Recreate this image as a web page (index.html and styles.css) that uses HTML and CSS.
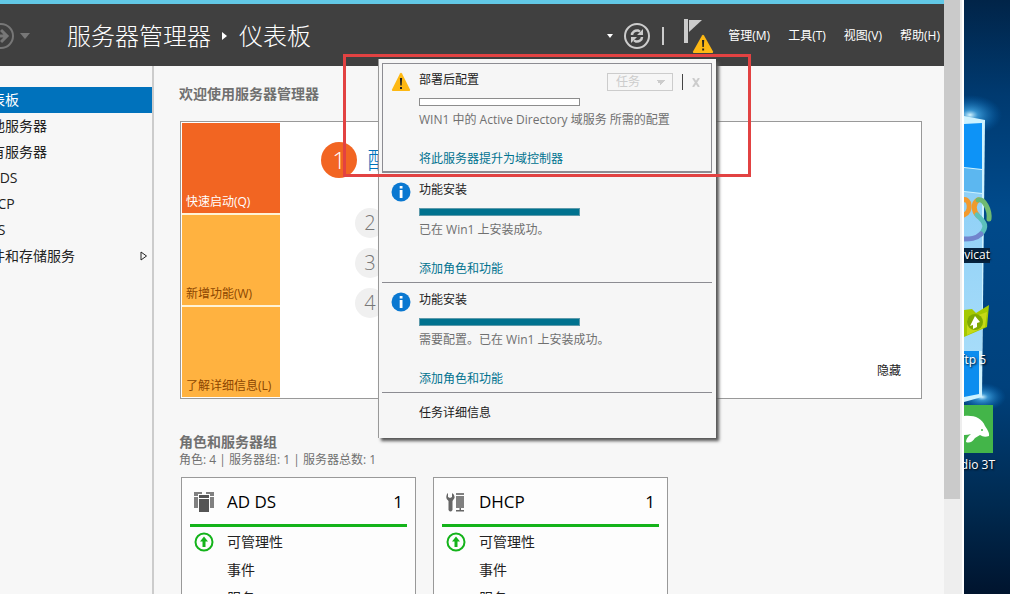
FILE: index.html
```html
<!DOCTYPE html>
<html lang="zh-CN">
<head>
    <meta charset="UTF-8">
    <meta name="viewport" content="width=device-width, initial-scale=1.0">
    <title>服务器管理器</title>
    <link rel="stylesheet" href="styles.css">
</head>
<body>
    <div class="screen">
        <div class="window">
            <header class="header">
                <button class="icon-btn forward-btn" aria-label="前进">
                    <svg width="26" height="26" viewBox="0 0 26 26">
                        <circle cx="13" cy="13" r="12" fill="none" stroke="#777" stroke-width="2"/>
                        <path d="M6 13h13M13 7l6 6-6 6" fill="none" stroke="#777" stroke-width="3"/>
                    </svg>
                    <svg width="12" height="6" viewBox="0 0 12 6"><path d="M1 0h10L6 6z" fill="#777"/></svg>
                </button>
                <h1 class="title">
                    <span>服务器管理器</span>
                    <svg width="6" height="8" viewBox="0 0 6 8"><path d="M0 0l5 4-5 4z" fill="#fff"/></svg>
                    <span>仪表板</span>
                </h1>
                <div class="tools">
                    <button class="icon-btn" aria-label="刷新">
                        <svg width="8" height="5" viewBox="0 0 8 5"><path d="M1 0h6L4 4z" fill="#fff"/></svg>
                        <svg width="26" height="26" viewBox="0 0 26 26">
                            <circle cx="13" cy="13" r="12" fill="none" stroke="#ccc" stroke-width="2"/>
                            <path d="M8 12c0-3 3-5 6-4.500l2 1M18 14c0 3-3 5-6 4.500l-2-1" fill="none" stroke="#ccc" stroke-width="2.500"/>
                            <path d="M19 6v6h-6zM7 20v-6h6z" fill="#ccc"/>
                        </svg>
                    </button>
                    <span class="tools-line"></span>
                    <button class="icon-btn" aria-label="通知">
                        <svg width="30" height="36" viewBox="0 0 30 36">
                            <path d="M0 1h4v24H0z" fill="#ccc"/>
                            <path d="M5 2h13L5 14z" fill="#ccc"/>
                            <path d="M18 17.500q1-1.500 2 0l9 16q.5 1.500-1 1.500H10q-1.500 0-1-1.500z" fill="#fdb813"/>
                            <path d="M18 22h2.200l-.4 7h-1.400zM18.200 30.500h1.900v2h-1.900z" fill="#222"/>
                        </svg>
                    </button>
                </div>
                <nav class="menu">
                    <a href="#">管理(M)</a>
                    <a href="#">工具(T)</a>
                    <a href="#">视图(V)</a>
                    <a href="#">帮助(H)</a>
                </nav>
            </header>

            <div class="content">
                <nav class="sidebar">
                    <a class="active" href="#">仪表板</a>
                    <a href="#">本地服务器</a>
                    <a href="#">所有服务器</a>
                    <a href="#">AD DS</a>
                    <a href="#">DHCP</a>
                    <a href="#">DNS</a>
                    <a href="#">文件和存储服务
                        <svg width="8" height="10" viewBox="0 0 8 10"><path d="M1 1l5.500 4L1 9z" fill="none" stroke="#222"/></svg>
                    </a>
                </nav>

                <main class="main">
                    <h2>欢迎使用服务器管理器</h2>
                    <section class="welcome">
                        <div class="tiles">
                            <button class="tile tile-active">快速启动(Q)</button>
                            <button class="tile">新增功能(W)</button>
                            <button class="tile">了解详细信息(L)</button>
                        </div>
                        <ol class="steps">
                            <li class="current"><span class="number">1</span><a href="#">配</a></li>
                            <li><span class="number">2</span></li>
                            <li><span class="number">3</span></li>
                            <li><span class="number">4</span></li>
                        </ol>
                        <button class="hide-btn">隐藏</button>
                    </section>

                    <h2>角色和服务器组</h2>
                    <p class="summary">角色: 4 | 服务器组: 1 | 服务器总数: 1</p>
                    <div class="cards">
                        <section class="card">
                            <h3>
                                <svg width="20" height="20" viewBox="0 0 20 20">
                                    <path d="M0 0h8v2H4v2H0zM12 0h8v4h-4V2h-4zM0 5h4v11H0zM16 5h4v11h-4z" fill="#808080"/>
                                    <path d="M5 3h10v3H5zM5 7h10v13H5z" fill="#555"/>
                                </svg>
                                AD DS
                                <span class="count">1</span>
                            </h3>
                            <ul>
                                <li>
                                    <svg width="20" height="20" viewBox="0 0 20 20">
                                        <circle cx="10" cy="10" r="8.500" fill="none" stroke="#14b31a" stroke-width="2"/>
                                        <path d="M10 4.500l4 5h-2.500V15h-3V9.500H6z" fill="#14b31a"/>
                                    </svg>
                                    可管理性
                                </li>
                                <li>事件</li>
                                <li>服务</li>
                            </ul>
                        </section>
                        <section class="card">
                            <h3>
                                <svg width="20" height="20" viewBox="0 0 20 20">
                                    <path d="M2 1v4l2 1 2-1V1q3 1.500 2.500 5L6.500 9v9q-2 3-4 0V9Q-1 7 1 2z" fill="#666"/>
                                    <path d="M10 1h8v2h-8zM10 4h8v12h-8z" fill="#808080"/>
                                    <path d="M13.500 16h1.500v2h3v1.500h-8V18h3.500z" fill="#666"/>
                                </svg>
                                DHCP
                                <span class="count">1</span>
                            </h3>
                            <ul>
                                <li>
                                    <svg width="20" height="20" viewBox="0 0 20 20">
                                        <circle cx="10" cy="10" r="8.500" fill="none" stroke="#14b31a" stroke-width="2"/>
                                        <path d="M10 4.500l4 5h-2.500V15h-3V9.500H6z" fill="#14b31a"/>
                                    </svg>
                                    可管理性
                                </li>
                                <li>事件</li>
                                <li>服务</li>
                            </ul>
                        </section>
                    </div>
                </main>
            </div>

            <div class="popup">
                <div class="notice selected">
                    <svg width="20" height="20" viewBox="0 0 20 20">
                        <path d="M9 1.500q1-1.500 2 0l8 16q.5 1.500-1 1.500H2q-1.500 0-1-1.500z" fill="#fdb813"/>
                        <path d="M8.900 6h2.200l-.4 7.500H9.300zM9 15h2v2H9z" fill="#222"/>
                    </svg>
                    <div class="notice-body">
                        <h4>部署后配置</h4>
                        <div class="bar"></div>
                        <p>WIN1 中的 Active Directory 域服务 所需的配置</p>
                        <a href="#">将此服务器提升为域控制器</a>
                    </div>
                    <div class="notice-tools">
                        <select aria-label="任务" disabled>
                            <option>任务</option>
                        </select>
                        <span class="line"></span>
                        <button class="icon-btn" aria-label="关闭">
                            <svg width="8" height="9" viewBox="0 0 8 9"><path d="M1 0l6 9M7 0L1 9" fill="none" stroke="#ccc" stroke-width="2"/></svg>
                        </button>
                    </div>
                </div>
                <div class="notice">
                    <svg width="20" height="20" viewBox="0 0 20 20">
                        <circle cx="10" cy="10" r="9.500" fill="#0a78d1"/>
                        <path d="M8.700 4h2.800v2.500H8.700zM8.700 8h2.800v8H8.700z" fill="#fff"/>
                    </svg>
                    <div class="notice-body">
                        <h4>功能安装</h4>
                        <div class="bar done"></div>
                        <p>已在 Win1 上安装成功。</p>
                        <a href="#">添加角色和功能</a>
                    </div>
                </div>
                <div class="notice">
                    <svg width="20" height="20" viewBox="0 0 20 20">
                        <circle cx="10" cy="10" r="9.500" fill="#0a78d1"/>
                        <path d="M8.700 4h2.800v2.500H8.700zM8.700 8h2.800v8H8.700z" fill="#fff"/>
                    </svg>
                    <div class="notice-body">
                        <h4>功能安装</h4>
                        <div class="bar done"></div>
                        <p>需要配置。已在 Win1 上安装成功。</p>
                        <a href="#">添加角色和功能</a>
                    </div>
                </div>
                <button class="details-btn">任务详细信息</button>
            </div>
            <div class="highlight"></div>
        </div>

        <div class="scrollbar"><div class="thumb"></div></div>

        <div class="desktop">
            <svg class="wallpaper" width="46" height="594" viewBox="0 0 46 594">
                <defs>
                    <linearGradient id="sky" x1="0" y1="0" x2="0" y2="1">
                        <stop offset="0" stop-color="#012448"/>
                        <stop offset=".16" stop-color="#003a70"/>
                        <stop offset=".35" stop-color="#004a8b"/>
                        <stop offset=".65" stop-color="#00417c"/>
                        <stop offset=".85" stop-color="#002a50"/>
                        <stop offset="1" stop-color="#00142e"/>
                    </linearGradient>
                    <linearGradient id="pane" x1="0" y1="0" x2="0" y2="1">
                        <stop offset="0" stop-color="#8fd0f7"/>
                        <stop offset="1" stop-color="#a6dcf9"/>
                    </linearGradient>
                    <radialGradient id="glow">
                        <stop offset="0" stop-color="#d8f6ff"/>
                        <stop offset=".25" stop-color="#4bb4f2" stop-opacity=".7"/>
                        <stop offset="1" stop-color="#0070c8" stop-opacity="0"/>
                    </radialGradient>
                </defs>
                <rect width="46" height="594" fill="url(#sky)"/>
                <ellipse cx="6" cy="115" rx="32" ry="20" fill="url(#glow)"/>
                <ellipse cx="18" cy="397" rx="24" ry="14" fill="url(#glow)"/>
                <path d="M0 116l21 4-3 277-18 5z" fill="#cdf2ff"/>
                <path d="M0 124l18-1v46l-18-2z" fill="#0d93f7"/>
                <path d="M0 168l18 2v23l-18-2z" fill="#5cb7f0"/>
                <path d="M0 192l18 2v157H0z" fill="url(#pane)"/>
                <path d="M0 351h15v43l-15 3z" fill="#0c8def"/>
                <rect y="248" width="26" height="15" fill="#06233f"/>
                <!-- Navicat -->
                <g fill="none" stroke-width="5" stroke-linecap="round">
                    <path d="M-1 200c7-3 9 12 1 15" stroke="#f29a2e"/>
                    <path d="M14 200c-5 3-5 11 0 16" stroke="#f09a2c"/>
                    <path d="M14 200c6-2 12 10 11 19" stroke="#6fba72"/>
                    <path d="M13 215c9 8 10 12 4 19" stroke="#5cc1bb"/>
                    <path d="M17 234c-5 5-11 5-18 5" stroke="#7185cd"/>
                </g>
                <!-- Xftp -->
                <path d="M0 310l8-1 4 4 13-8-2 22-23 10z" fill="#a5c900"/>
                <path d="M3 319l20-7-2 15-18 8z" fill="#c6d916"/>
                <circle cx="11" cy="322" r="8" fill="#7fa900"/>
                <path d="M11 316l5 6-3 1v4l-4 2v-4l-3 1z" fill="#fff"/>
                <!-- Studio 3T -->
                <rect y="405" width="29" height="48" fill="#43b549"/>
                <path d="M0 416c10-1 18 2 21 10q5 7 4 10-5 2-9-1l-5 3q-4 6-9 4 0-4 5-8-3 1-7 1z" fill="#fff"/>
                <circle cx="18" cy="430" r="1" fill="#43b549"/>
            </svg>
            <span class="label label-navicat">Navicat</span>
            <span class="label label-xftp">Xftp 5</span>
            <span class="label label-studio">Studio 3T</span>
        </div>
    </div>
</body>
</html>
```
FILE: styles.css
```css
* {
    box-sizing: border-box;
}
body {
    margin: 0;
    font-family: "Open Sans", "Noto Sans CJK SC", sans-serif;
    font-size: 12px;
    line-height: 18px;
    color: #222;
    background: #f7f7f7;
}
h1, h2, h3, h4, p, ul, ol {
    margin: 0;
    padding: 0;
    font-weight: normal;
}
ul, ol {
    list-style: none;
}
a {
    color: inherit;
    text-decoration: none;
}
button, select {
    font: inherit;
    color: inherit;
    background: none;
    border: none;
    border-radius: 0;
    padding: 0;
}
svg {
    display: block;
    flex: none;
}
.screen {
    display: flex;
    height: 100vh;
    overflow: hidden;
}
.window {
    position: relative;
    flex: 1;
    min-width: 0;
    display: flex;
    flex-direction: column;
    overflow: hidden;
}

/* header */
.header {
    flex: none;
    display: flex;
    align-items: center;
    height: 66px;
    padding: 2px 4px 0 0;
    border-top: 4px solid #62c8e6;
    background: #404040;
    color: #fff;
}
.icon-btn {
    display: flex;
    align-items: center;
    gap: 10px;
}
.forward-btn {
    gap: 5px;
    margin-left: -12px;
}
.title {
    display: flex;
    align-items: center;
    gap: 11px;
    margin-left: 36px;
    font-size: 24px;
    font-weight: 300;
    line-height: 36px;
}
.tools {
    display: flex;
    align-items: center;
    gap: 12px;
    margin-left: auto;
}
.tools-line {
    width: 2px;
    height: 18px;
    margin-right: 8px;
    background: #ccc;
}
.menu {
    display: flex;
    gap: 18px;
    margin-left: 14px;
}

/* layout */
.content {
    flex: 1;
    min-height: 0;
    display: flex;
}
.sidebar {
    flex: 0 0 154px;
    padding-top: 21px;
    border-right: 2px solid #ccc;
    font-size: 14px;
    line-height: 26px;
}
.sidebar a {
    display: flex;
    align-items: center;
    justify-content: space-between;
    margin-left: -23px;
    padding-right: 4px;
}
.sidebar .active {
    background: #0072bc;
    color: #fff;
}
.main {
    flex: 1;
    min-width: 0;
    padding: 18px 22px 0 25px;
}
.main h2 {
    font-size: 14px;
    font-weight: bold;
    line-height: 20px;
    color: #707070;
}

/* welcome */
.welcome {
    display: flex;
    margin: 17px 0 33px 1px;
    padding: 1px;
    border: 1px solid #999;
    background: #fff;
}
.tiles {
    display: grid;
    grid-template-rows: repeat(3, 90px);
    gap: 2px;
    width: 98px;
    background: #fff3d6;
}
.tile {
    display: flex;
    align-items: flex-end;
    padding: 0 4px 2px;
    background: #ffb240;
    color: #8c4600;
    white-space: nowrap;
}
.tile-active {
    background: #f26522;
    color: #fff;
}
.steps {
    flex: 1;
    padding: 19px 0 0 41px;
}
.steps li {
    display: flex;
    align-items: center;
    gap: 10px;
    height: 40px;
    padding-left: 34px;
    font-size: 20px;
    font-weight: 300;
}
.steps .current {
    height: 36px;
    margin-bottom: 25px;
    padding-left: 0;
    font-size: 24px;
    color: #0072bc;
}
.number {
    width: 30px;
    border-radius: 50%;
    line-height: 30px;
    text-align: center;
    background: #f0f0f0;
    color: #777;
}
.current .number {
    width: 36px;
    line-height: 36px;
    background: #f26522;
    color: #fff;
}
.hide-btn {
    align-self: flex-end;
    margin: 0 19px 17px 0;
}

/* role cards */
.summary {
    line-height: 16px;
    margin-bottom: 9px;
    color: #707070;
}
.cards {
    display: flex;
    gap: 17px;
    margin-left: 2px;
}
.card {
    flex: 0 0 235px;
    padding: 0 8px;
    border: 1px solid #999;
    background: #fdfdfd;
    font-size: 14px;
}
.card h3 {
    display: flex;
    align-items: center;
    gap: 13px;
    height: 49px;
    padding: 2px 4px 0;
    border-bottom: 3px solid #14b31a;
    font-size: 17px;
    color: #000;
}
.count {
    margin-left: auto;
}
.card li {
    position: relative;
    padding-left: 37px;
    line-height: 28px;
}
.card ul {
    padding-top: 1px;
}
.card li svg {
    position: absolute;
    left: 4px;
    top: 4px;
}

/* notifications */
.popup {
    position: absolute;
    top: 59px;
    right: 228px;
    width: 338px;
    padding: 4px 4px 0 3px;
    border-left: 1px solid #999;
    background: #f6f6f6;
    box-shadow: 3px 3px 3px #555;
}
.notice {
    display: flex;
    gap: 8px;
    height: 110px;
    padding: 9px 9px 0;
    border-bottom: 1px solid #8c8c92;
}
.notice.selected {
    padding: 8px 8px 0;
    border: 1px solid #8c8c92;
    border-bottom-width: 2px;
}
.notice-body {
    flex: 1;
    margin-top: -1px;
    white-space: nowrap;
}
.notice h4 {
    color: #222;
    font-size: 12px;
}
.bar {
    width: 161px;
    height: 8px;
    margin: 9px 0 5px;
    border: 1px solid #8c8c8c;
    background: #fff;
}
.bar.done {
    border-color: #5d9aab;
    background: #00728f;
}
.notice p {
    margin-bottom: 21px;
    color: #707070;
}
.notice a {
    color: #00728f;
}
.notice-tools {
    position: absolute;
    top: 14px;
    right: 16px;
    display: flex;
    align-items: center;
    gap: 9px;
}
.notice-tools select {
    width: 66px;
    height: 18px;
    padding: 0 8px;
    border: 1px solid #ccc;
    appearance: none;
    line-height: 16px;
    color: #ccc;
    opacity: 1;
    background: linear-gradient(to bottom right, #ccc 50%, transparent 50%) 53px 6px / 5px 5px no-repeat,
        linear-gradient(to bottom left, #ccc 50%, transparent 50%) 48px 6px / 5px 5px no-repeat;
}
.notice-tools .line {
    width: 1px;
    height: 16px;
    background: #444;
}
.details-btn {
    display: block;
    height: 45px;
    padding: 0 37px 6px;
}
.highlight {
    position: absolute;
    top: 54px;
    right: 193px;
    width: 408px;
    height: 123px;
    border: 3px solid #e24242;
}

/* right edge */
.scrollbar {
    flex: 0 0 20px;
    border-right: 2px solid #fff;
    background: #eee;
}
.thumb {
    width: 16px;
    height: 84%;
    background: #cacaca;
}
.desktop {
    position: relative;
    flex: 0 0 46px;
    overflow: hidden;
    background: #00142e;
    color: #fff;
}
.label {
    position: absolute;
    white-space: nowrap;
    text-shadow: 1px 1px 2px #000;
}
.label-navicat {
    top: 246px;
    right: 20px;
}
.label-xftp {
    top: 351px;
    right: 24px;
}
.label-studio {
    top: 456px;
    right: 15px;
}
```
